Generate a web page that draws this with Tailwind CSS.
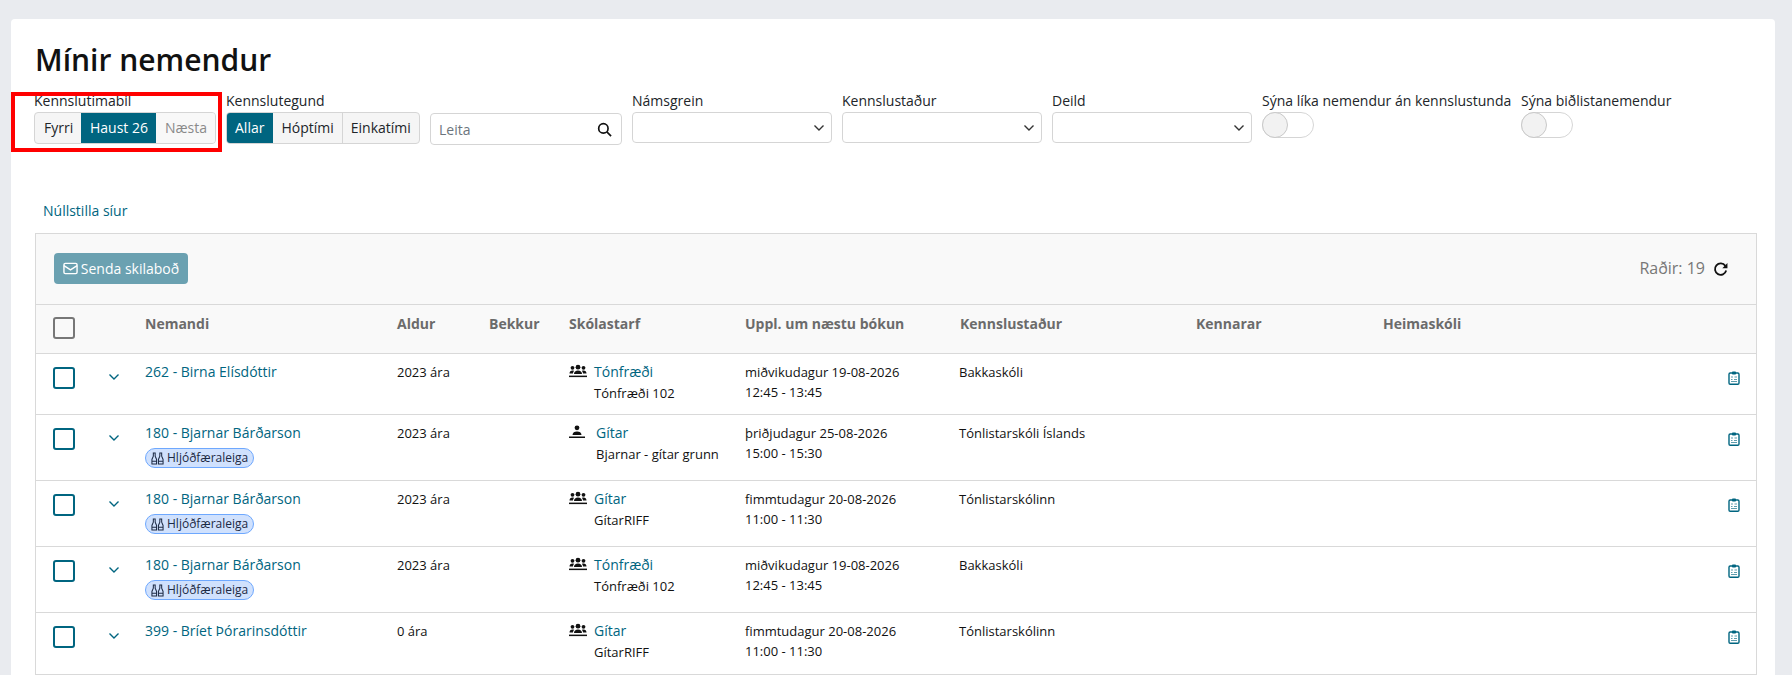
<!DOCTYPE html>
<html lang="en">
<head>
  <meta charset="UTF-8" />
  <title>Mínir nemendur</title>
  <script src="https://cdn.jsdelivr.net/npm/@tailwindcss/browser@4"></script>
</head>
<body class="h-[675px] overflow-hidden bg-[#e9ebef] font-['Open_Sans',sans-serif] text-[14px] text-[#212529]">
  <svg class="hidden">
    <symbol id="chevron" viewBox="0 0 12 8"><path d="M1.5 1.5 6 6l4.5-4.500" fill="none" stroke="currentColor" stroke-width="1.400"/></symbol>
    <symbol id="group" viewBox="0 0 18 14"><g fill="currentColor"><circle cx="9" cy="3.200" r="2.400"/><circle cx="3.500" cy="3.800" r="1.900"/><circle cx="14.500" cy="3.800" r="1.900"/><path d="M5 10c0-2.300 1.700-3.500 4-3.500s4 1.200 4 3.500zM0.500 9.500c0-2 1.200-3 3-3 .7 0 1.200.1 1.600.4C4.300 7.700 4 8.500 4 9.500zM17.500 9.500c0-2-1.200-3-3-3-.7 0-1.200.1-1.600.4.800.8 1.100 1.600 1.100 2.600z"/><rect y="11.600" width="18" height="1.500"/></g></symbol>
    <symbol id="clip" viewBox="0 0 12 14"><rect x="1" y="2" width="10" height="11.300" rx="1.200" fill="none" stroke="currentColor" stroke-width="1.400"/><rect x="4" y="0.500" width="4" height="3" rx="0.800" fill="currentColor"/><path d="M3 6h2M6.500 6H9M3 8.500h1.500M6 8.500h3M3 10.500h6" stroke="currentColor" stroke-width="0.900" opacity="0.700"/></symbol>
    <symbol id="rent" viewBox="0 0 14 14"><path d="M2.500 1v3.500L1 8v5h5V8L4.500 4.500V1zM9.500 1v3.500L8 8v5h5V8l-1.500-3.500V1zM1 10h5M8 10h5" fill="none" stroke="currentColor" stroke-width="1.100"/></symbol>
  </svg>

  <main class="mt-[19px] ml-[11px] mr-[17px] h-[656px] overflow-hidden rounded-t-[4px] bg-white pl-[24px] pr-[18px]">
    <h1 class="pt-[21px] text-[30px] leading-[40px] font-semibold text-[#111]">Mínir nemendur</h1>

    <div class="relative mt-[11px] -ml-px flex h-[54px] items-start">
      <div class="absolute top-px -left-[23px] h-[60px] w-[211px] border-4 border-[#ff0000]"></div>
      <div class="w-[192px]">
        <div class="mb-[2px] leading-[19px]">Kennslutímabil</div>
        <div class="flex h-[32px] w-[182px] overflow-hidden rounded-[4px] border border-[#d5d5d5] bg-[#f5f5f5] leading-[30px] whitespace-nowrap">
          <span class="w-[46px] shrink-0 pl-[9px]">Fyrri</span>
          <span class="-my-px w-[75px] shrink-0 bg-[#006580] pl-[9px] leading-[32px] text-white">Haust 26</span>
          <span class="w-[60px] shrink-0 bg-[#f8f8f8] pl-[9px] text-[#8a8a8a]">Næsta</span>
        </div>
      </div>
      <div class="w-[204px]">
        <div class="mb-[2px] leading-[19px]">Kennslutegund</div>
        <div class="flex h-[32px] w-[194px] overflow-hidden rounded-[4px] border border-[#d5d5d5] bg-[#f5f5f5] leading-[30px]">
          <span class="-my-px -ml-px bg-[#006580] px-[9px] leading-[32px] text-white">Allar</span>
          <span class="border-r border-[#d5d5d5] px-[8px]">Hóptími</span>
          <span class="px-[8px]">Einkatími</span>
        </div>
      </div>
      <div class="mt-[22px] flex h-[32px] w-[192px] items-center justify-between rounded-[4px] border border-[#d5d5d5] pr-[9px] pl-[8px] text-[#6c757d]">
        <span>Leita</span>
        <svg class="size-[15px] text-[#111]" viewBox="0 0 16 16" fill="none" stroke="currentColor" stroke-width="1.800"><circle cx="6.800" cy="6.800" r="5"/><path d="M10.500 10.500 15 15"/></svg>
      </div>
      <div class="ml-[10px] w-[210px]">
        <div class="mb-[2px] leading-[19px]">Námsgrein</div>
        <div class="flex h-[31px] w-[200px] items-center justify-end rounded-[4px] border border-[#d5d5d5] pr-[6px]"><svg class="h-[8px] w-[12px] text-[#333]"><use href="#chevron"/></svg></div>
      </div>
      <div class="w-[210px]">
        <div class="mb-[2px] leading-[19px]">Kennslustaður</div>
        <div class="flex h-[31px] w-[200px] items-center justify-end rounded-[4px] border border-[#d5d5d5] pr-[6px]"><svg class="h-[8px] w-[12px] text-[#333]"><use href="#chevron"/></svg></div>
      </div>
      <div class="w-[210px]">
        <div class="mb-[2px] leading-[19px]">Deild</div>
        <div class="flex h-[31px] w-[200px] items-center justify-end rounded-[4px] border border-[#d5d5d5] pr-[6px]"><svg class="h-[8px] w-[12px] text-[#333]"><use href="#chevron"/></svg></div>
      </div>
      <div class="w-[259px]">
        <div class="mb-[2px] leading-[19px]">Sýna líka nemendur án kennslustunda</div>
        <div class="flex h-[26px] w-[52px] rounded-full border border-[#d5d5d5]"><span class="-m-px size-[26px] rounded-full border border-[#c8c8c8] bg-[#f2f2f2]"></span></div>
      </div>
      <div>
        <div class="mb-[2px] leading-[19px]">Sýna biðlistanemendur</div>
        <div class="flex h-[26px] w-[52px] rounded-full border border-[#d5d5d5]"><span class="-m-px size-[26px] rounded-full border border-[#c8c8c8] bg-[#f2f2f2]"></span></div>
      </div>
    </div>

    <a class="mt-[56px] ml-[8px] block leading-[20px] text-[#006580]">Núllstilla síur</a>

    <section class="mt-[12px] border border-[#d9d9d9]">
      <div class="flex h-[71px] items-center justify-between border-b border-[#d9d9d9] bg-[#f9f9f9] pr-[28px] pb-[2px] pl-[18px]">
        <button class="flex h-[31px] w-[134px] items-center justify-center gap-[3px] rounded-[4px] bg-[#6ba1b1] text-white">
          <svg class="h-[13px] w-[15px]" viewBox="0 0 16 13" fill="none" stroke="currentColor" stroke-width="1.500"><rect x="1" y="1" width="14" height="11" rx="1.500"/><path d="m1 3.500 7 4.500 7-4.500"/></svg>
          Senda skilaboð
        </button>
        <div class="flex items-center gap-[8px] text-[16px] text-[#777]">
          Raðir: 19
          <svg class="mt-[2px] size-[15px] text-[#111]" viewBox="0 0 14 14" fill="none" stroke="currentColor" stroke-width="1.700"><path d="M11.500 3.600A5.300 5.300 0 1 0 12.300 8"/><path d="M13.500 1v4.800H8.700z" fill="currentColor" stroke="none"/></svg>
        </div>
      </div>

      <div class="grid h-[49px] grid-cols-[109px_252px_92px_80px_176px_215px_236px_187px_1fr] border-b border-[#d9d9d9] bg-[#f9f9f9] pt-[9px] leading-[20px] font-bold text-[#6b6b6b]">
        <span class="pl-[17px]"><span class="mt-[3px] block size-[22px] rounded-[3px] border-2 border-[#777]"></span></span>
        <span>Nemandi</span><span>Aldur</span><span>Bekkur</span><span>Skólastarf</span><span>Uppl. um næstu bókun</span><span>Kennslustaður</span><span>Kennarar</span><span>Heimaskóli</span>
      </div>

      <div class="grid h-[61px] grid-cols-[62px_47px_252px_92px_80px_176px_214px_1fr_28px] border-b border-[#d9d9d9] pt-[8px] text-[13px] leading-[20px] text-[#111]">
        <span class="pl-[17px]"><span class="mt-[5px] block size-[22px] rounded-[3px] border-2 border-[#006580]"></span></span>
        <span class="pl-[10px] text-[#006580]"><svg class="mt-[11px] h-[8px] w-[12px]"><use href="#chevron"/></svg></span>
        <span class="text-[14px] text-[#006580]">262 - Birna Elísdóttir</span>
        <span>2023 ára</span><span></span>
        <span class="flex"><svg class="mt-[2px] mr-[7px] h-[14px] w-[18px]"><use href="#group"/></svg><span><span class="block text-[14px] text-[#006580]">Tónfræði</span><span class="block leading-[22px]">Tónfræði 102</span></span></span>
        <span>miðvikudagur 19-08-2026<br>12:45 - 13:45</span>
        <span>Bakkaskóli</span>
        <span class="text-[#006580]"><svg class="mt-[9px] h-[14px] w-[12px]"><use href="#clip"/></svg></span>
      </div>

      <div class="grid h-[66px] grid-cols-[62px_47px_252px_92px_80px_176px_214px_1fr_28px] border-b border-[#d9d9d9] pt-[8px] text-[13px] leading-[20px] text-[#111]">
        <span class="pl-[17px]"><span class="mt-[5px] block size-[22px] rounded-[3px] border-2 border-[#006580]"></span></span>
        <span class="pl-[10px] text-[#006580]"><svg class="mt-[11px] h-[8px] w-[12px]"><use href="#chevron"/></svg></span>
        <span><span class="block text-[14px] text-[#006580]">180 - Bjarnar Bárðarson</span><span class="mt-[5px] inline-flex h-[20px] items-center gap-[3px] rounded-full border border-[#6ea8fe] bg-[#d0e1fd] px-[5px] text-[12px] text-[#1c2a44]"><svg class="size-[13px]"><use href="#rent"/></svg>Hljóðfæraleiga</span></span>
        <span>2023 ára</span><span></span>
        <span class="flex"><svg class="mt-[2px] mr-[11px] h-[14px] w-[16px]" viewBox="0 0 16 14"><g fill="currentColor"><circle cx="8" cy="2.800" r="2.400"/><path d="M3.500 10c0-2.500 2-3.500 4.500-3.500s4.500 1 4.500 3.500z"/><rect y="11.500" width="16" height="1.500"/></g></svg><span><span class="block text-[14px] text-[#006580]">Gítar</span><span class="block leading-[22px]">Bjarnar - gítar grunn</span></span></span>
        <span>þriðjudagur 25-08-2026<br>15:00 - 15:30</span>
        <span>Tónlistarskóli Íslands</span>
        <span class="text-[#006580]"><svg class="mt-[9px] h-[14px] w-[12px]"><use href="#clip"/></svg></span>
      </div>

      <div class="grid h-[66px] grid-cols-[62px_47px_252px_92px_80px_176px_214px_1fr_28px] border-b border-[#d9d9d9] pt-[8px] text-[13px] leading-[20px] text-[#111]">
        <span class="pl-[17px]"><span class="mt-[5px] block size-[22px] rounded-[3px] border-2 border-[#006580]"></span></span>
        <span class="pl-[10px] text-[#006580]"><svg class="mt-[11px] h-[8px] w-[12px]"><use href="#chevron"/></svg></span>
        <span><span class="block text-[14px] text-[#006580]">180 - Bjarnar Bárðarson</span><span class="mt-[5px] inline-flex h-[20px] items-center gap-[3px] rounded-full border border-[#6ea8fe] bg-[#d0e1fd] px-[5px] text-[12px] text-[#1c2a44]"><svg class="size-[13px]"><use href="#rent"/></svg>Hljóðfæraleiga</span></span>
        <span>2023 ára</span><span></span>
        <span class="flex"><svg class="mt-[2px] mr-[7px] h-[14px] w-[18px]"><use href="#group"/></svg><span><span class="block text-[14px] text-[#006580]">Gítar</span><span class="block leading-[22px]">GítarRIFF</span></span></span>
        <span>fimmtudagur 20-08-2026<br>11:00 - 11:30</span>
        <span>Tónlistarskólinn</span>
        <span class="text-[#006580]"><svg class="mt-[9px] h-[14px] w-[12px]"><use href="#clip"/></svg></span>
      </div>

      <div class="grid h-[66px] grid-cols-[62px_47px_252px_92px_80px_176px_214px_1fr_28px] border-b border-[#d9d9d9] pt-[8px] text-[13px] leading-[20px] text-[#111]">
        <span class="pl-[17px]"><span class="mt-[5px] block size-[22px] rounded-[3px] border-2 border-[#006580]"></span></span>
        <span class="pl-[10px] text-[#006580]"><svg class="mt-[11px] h-[8px] w-[12px]"><use href="#chevron"/></svg></span>
        <span><span class="block text-[14px] text-[#006580]">180 - Bjarnar Bárðarson</span><span class="mt-[5px] inline-flex h-[20px] items-center gap-[3px] rounded-full border border-[#6ea8fe] bg-[#d0e1fd] px-[5px] text-[12px] text-[#1c2a44]"><svg class="size-[13px]"><use href="#rent"/></svg>Hljóðfæraleiga</span></span>
        <span>2023 ára</span><span></span>
        <span class="flex"><svg class="mt-[2px] mr-[7px] h-[14px] w-[18px]"><use href="#group"/></svg><span><span class="block text-[14px] text-[#006580]">Tónfræði</span><span class="block leading-[22px]">Tónfræði 102</span></span></span>
        <span>miðvikudagur 19-08-2026<br>12:45 - 13:45</span>
        <span>Bakkaskóli</span>
        <span class="text-[#006580]"><svg class="mt-[9px] h-[14px] w-[12px]"><use href="#clip"/></svg></span>
      </div>

      <div class="grid h-[62px] grid-cols-[62px_47px_252px_92px_80px_176px_214px_1fr_28px] border-b border-[#d9d9d9] pt-[8px] text-[13px] leading-[20px] text-[#111]">
        <span class="pl-[17px]"><span class="mt-[5px] block size-[22px] rounded-[3px] border-2 border-[#006580]"></span></span>
        <span class="pl-[10px] text-[#006580]"><svg class="mt-[11px] h-[8px] w-[12px]"><use href="#chevron"/></svg></span>
        <span class="text-[14px] text-[#006580]">399 - Bríet Þórarinsdóttir</span>
        <span>0 ára</span><span></span>
        <span class="flex"><svg class="mt-[2px] mr-[7px] h-[14px] w-[18px]"><use href="#group"/></svg><span><span class="block text-[14px] text-[#006580]">Gítar</span><span class="block leading-[22px]">GítarRIFF</span></span></span>
        <span>fimmtudagur 20-08-2026<br>11:00 - 11:30</span>
        <span>Tónlistarskólinn</span>
        <span class="text-[#006580]"><svg class="mt-[9px] h-[14px] w-[12px]"><use href="#clip"/></svg></span>
      </div>
    </section>
  </main>
</body>
</html>
